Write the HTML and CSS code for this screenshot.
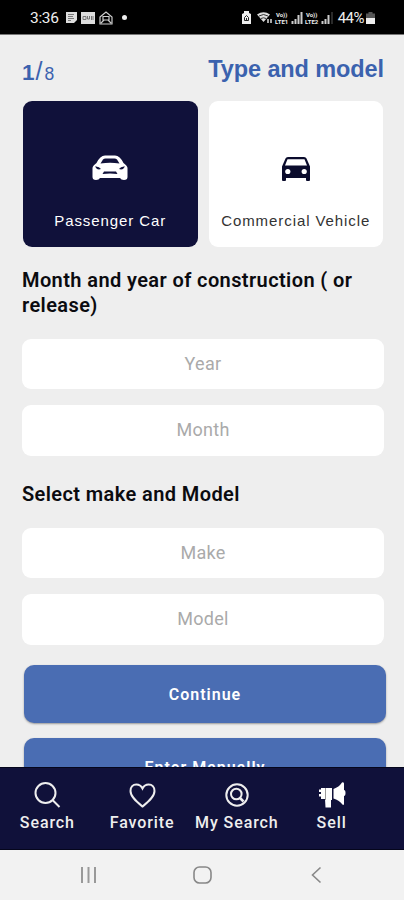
FILE: index.html
```html
<!DOCTYPE html>
<html lang="en">
<head>
    <meta charset="UTF-8">
    <meta name="viewport" content="width=device-width, initial-scale=1">
    <title>Type and model</title>
    <link rel="stylesheet" href="styles.css">
</head>
<body>
<div class="phone">

    <!-- Status bar -->
    <div class="status-bar">
        <div class="status-left">
            <span class="clock">3:36</span>
            <svg width="12" height="13" viewBox="0 0 12 13"><path d="M1 1h11v8l-3 3H1z" fill="#ddd"/><path d="M3 3.500h6M3 5.500h5M3 7.500h6M3 9.500h3" stroke="#777"/></svg>
            <svg width="14" height="12" viewBox="0 0 14 12"><path d="M0 0h14v12H0z" fill="#ddd"/><path d="M2 4.500h3v3H2zM6.500 4v3h2V4M10.500 4v4M12 4v4" fill="none" stroke="#777"/></svg>
            <svg width="14" height="14" viewBox="0 0 14 14"><path d="M1 6l6-5 6 5v7H1zM2 12l3-3h4l3 3M4 5.500h6V9H4z" fill="none" stroke="#ccc" stroke-width="1.200"/></svg>
            <span class="dot"></span>
        </div>
        <div class="status-right">
            <svg width="9" height="13" viewBox="0 0 9 13"><path d="M2 2V0h5v2l2 1v10H0V3z" fill="#eee"/><path d="M2.500 6.500l2-2 2 2v3h-4zM4.500 7v3" fill="none" stroke="#222"/></svg>
            <svg class="wifi" width="16" height="13" viewBox="0 0 16 13"><path d="M0 3.500Q6.500-1 13 3.500L6.500 11z" fill="#ddd"/><path d="M2 5q4.500-3 9 0M4 7.500q2.500-1.500 5 0" fill="none" stroke="#333"/><path d="M11 12V8M14 8v4" stroke="#ddd" stroke-width="1.500"/></svg>
            <span class="volte"><span>Vo))</span><span>LTE1</span></span>
            <svg width="12" height="12" viewBox="0 0 12 12"><path d="M1.500 12V9M4.500 12V7M7.500 12V3M10.500 12V0" stroke="#ccc" stroke-width="2"/></svg>
            <span class="volte"><span>Vo))</span><span>LTE2</span></span>
            <svg width="12" height="12" viewBox="0 0 12 12"><path d="M1.500 12V9M4.500 12V7M7.500 12V3" stroke="#ccc" stroke-width="2"/><path d="M11 12V0" stroke="#555"/></svg>
            <span class="battery">44%</span>
            <svg width="9" height="12" viewBox="0 0 9 12"><path d="M2.500 0h4v1.500H9V6H0V1.500h2.500z" fill="#555"/><path d="M0 6h9v6H0z" fill="#eee"/></svg>
        </div>
    </div>

    <!-- Form -->
    <main class="content">
        <header class="page-header">
            <div class="step"><b>1</b><span class="slash">/</span><span class="total">8</span></div>
            <h1>Type and model</h1>
        </header>

        <div class="cards">
            <div class="card active">
                <svg width="36" height="26" viewBox="0 0 36 26">
                    <path d="M.5 13q0-2 4-5Q8 .8 13 .5h10q5 .3 8.500 7.500 4 3 4 5v9q0 3-3.500 3-3 0-4-2H8q-1 2-4 2-3.500 0-3.500-3z" fill="#fff"/>
                    <path d="M8.500 8.500l2.500-4q1-1 2.500-1h9q1.500 0 2.500 1l2.500 4q-9.500-1.500-19 0z" fill="#10113a"/>
                    <path d="M3 11.500q4-.5 6 2.500-4 1.500-6-2.500zM33 11.500q-4-.5-6 2.500 4 1.500 6-2.500zM10.500 19l1.500-2.500h12l1.500 2.500q-7.500-1-15 0z" fill="#10113a"/>
                </svg>
                <span>Passenger Car</span>
            </div>
            <div class="card">
                <svg width="28" height="24" viewBox="0 0 28 24">
                    <path d="M0 9.500L3.500 1.500Q4 0 6 0h16q2 0 2.500 1.500l3.500 8V23q0 1-1 1h-2q-1 0-1-1v-2H4v2q0 1-1 1H1q-1 0-1-1z" fill="#0a0b2c"/>
                    <path d="M3 8.500L5.500 2.200h17L25 8.500z" fill="#fff"/>
                    <circle cx="5.800" cy="14.500" r="2.600" fill="#fff"/><circle cx="22.200" cy="14.500" r="2.600" fill="#fff"/>
                </svg>
                <span>Commercial Vehicle</span>
            </div>
        </div>

        <h2>Month and year of construction ( or release)</h2>
        <div class="fields">
            <input type="text" placeholder="Year">
            <input type="text" placeholder="Month">
        </div>

        <h2 class="make-title">Select make and Model</h2>
        <div class="fields">
            <input type="text" placeholder="Make">
            <input type="text" placeholder="Model">
        </div>

        <div class="buttons">
            <button>Continue</button>
            <button>Enter Manually</button>
        </div>
    </main>

    <!-- Bottom menu -->
    <nav class="tab-bar">
        <a class="tab">
            <svg width="28" height="28" viewBox="0 0 28 28" fill="none" stroke="#eee" stroke-width="2"><circle cx="12.500" cy="12" r="10"/><path d="M19.500 19l7 7"/></svg>
            <span>Search</span>
        </a>
        <a class="tab">
            <svg width="28" height="28" viewBox="0 0 28 28" fill="none" stroke="#eee" stroke-width="2"><path d="M14.500 25.500C9 21 2.500 16 2.500 10 2.500 6 5 3.500 8.300 3.500c2.700 0 5 1.500 6.200 4 1.200-2.500 3.500-4 6.200-4 3.300 0 5.800 2.500 5.800 6.500 0 6-6.500 11-12 15.500z"/></svg>
            <span>Favorite</span>
        </a>
        <a class="tab">
            <svg width="28" height="28" viewBox="0 0 28 28" fill="none" stroke="#eee" stroke-width="2"><circle cx="14" cy="14" r="10.700"/><circle cx="13.300" cy="13" r="5.300"/><path d="M16.500 16.500l4 4" stroke-width="2.500"/></svg>
            <span>My Search</span>
        </a>
        <a class="tab">
            <svg width="28" height="28" viewBox="0 0 28 28"><path d="M15.500 8Q21 6 24 1.500q1.500-1 2 1V9q1.500 0 1.500 3T26 15v8q-.5 2-2 0-3-4-8.500-5.500zM6 7h8v12h-1v7.500H7.500L7 18H3v-2.500H1V13h2v-2H1V8.500h2V7z" fill="#fff"/><path d="M7.500 7v12" stroke="#999"/></svg>
            <span>Sell</span>
        </a>
    </nav>

    <!-- Android buttons -->
    <div class="system-bar">
        <svg width="18" height="18" viewBox="0 0 18 18"><path d="M3 1v16M9.500 1v16M16 1v16" stroke="#999" stroke-width="2"/></svg>
        <svg width="18" height="18" viewBox="0 0 18 18"><rect x="1" y="1" width="17" height="16" rx="5.500" fill="none" stroke="#888" stroke-width="1.600"/></svg>
        <svg width="18" height="18" viewBox="0 0 18 18"><path d="M13.500 1.500L5.500 9l8 7.500" fill="none" stroke="#888" stroke-width="1.600"/></svg>
    </div>

</div>
</body>
</html>
```
FILE: styles.css
```css
* {
    box-sizing: border-box;
}

body {
    margin: 0;
    background: #eee;
    font-family: Roboto, sans-serif;
    color: #0b0b0f;
}

svg {
    display: block;
    flex: none;
    overflow: visible;
}

.phone {
    width: 404px;
    height: 900px;
    display: flex;
    flex-direction: column;
    overflow: hidden;
}

/* Status bar */
.status-bar {
    height: 35px;
    flex: none;
    display: flex;
    justify-content: space-between;
    align-items: center;
    padding: 1px 29px 0 30px;
    background: #000;
    border-bottom: 1px solid #777;
    color: #eee;
}

.status-left, .status-right {
    display: flex;
    align-items: center;
}

.status-left {
    gap: 4px;
}

.status-right {
    gap: 1px;
}

.clock {
    width: 31px;
    font-size: 15.500px;
    letter-spacing: -0.300px;
}

.dot {
    width: 5px;
    height: 5px;
    margin-left: 5px;
    border-radius: 50%;
    background: #eee;
}

.wifi {
    margin-left: 5px;
}

.volte {
    width: 16px;
    display: flex;
    flex-direction: column;
    align-items: center;
    font-size: 6px;
    line-height: 7px;
    font-weight: 700;
}

.battery {
    margin: 0 1px 0 4px;
    font-size: 15px;
    letter-spacing: -0.500px;
}

/* Form */
.content {
    flex: 1;
    min-height: 0;
    overflow: hidden;
    padding: 20px 20px 0 22px;
}

.page-header {
    height: 46px;
    display: flex;
    justify-content: space-between;
    color: #3b62ae;
    font-family: "Liberation Sans", sans-serif;
}

.step {
    padding-top: 3px;
    font-size: 22.500px;
    line-height: 26px;
}

.slash {
    font-size: 25px;
    margin: 0 2px 0 1px;
}

.total {
    font-size: 17.500px;
}

h1 {
    margin: 0;
    font-size: 23.500px;
    line-height: 28px;
    letter-spacing: -0.100px;
}

.cards {
    display: flex;
    gap: 11px;
    padding: 0 1px;
}

.card {
    flex: 1;
    height: 146px;
    display: flex;
    flex-direction: column;
    align-items: center;
    justify-content: flex-end;
    gap: 31px;
    padding-bottom: 17px;
    border-radius: 9px;
    background: #fff;
    color: #333;
    font: 15px/18px "Liberation Sans", sans-serif;
    letter-spacing: 0.920px;
    white-space: nowrap;
}

.card.active {
    background: #10113a;
    color: #fff;
}

h2 {
    margin: 21px 0 20.500px;
    font-size: 20px;
    line-height: 25px;
    font-weight: 600;
    letter-spacing: 0.400px;
}

.make-title {
    margin: 26px 0 21px;
}

.fields {
    display: flex;
    flex-direction: column;
    gap: 16px;
}

.fields input {
    width: 362px;
    height: 50.500px;
    padding: 0 0 1px;
    border: 0;
    border-radius: 9px;
    background: #fff;
    font: 18px Roboto, sans-serif;
    letter-spacing: 0.300px;
    text-align: center;
}

.fields input::placeholder {
    color: #aaa;
}

.buttons {
    display: flex;
    flex-direction: column;
    gap: 15px;
    padding: 20.500px 0 0 2px;
}

.buttons button {
    width: 362px;
    height: 58px;
    flex: none;
    border: 0;
    border-radius: 10px;
    background: #4a6db3;
    box-shadow: 0 1px 2px #999;
    color: #fff;
    font: 600 16px Roboto, sans-serif;
    letter-spacing: 1px;
}

/* Bottom menu */
.tab-bar {
    height: 83px;
    flex: none;
    display: flex;
    padding-right: 25px;
    background: #10113a;
    border-top: 1px solid #05061c;
    border-bottom: 1px solid #05061c;
}

.tab {
    flex: 1;
    display: flex;
    flex-direction: column;
    align-items: center;
    gap: 4px;
    padding-top: 13px;
    color: #eee;
    font-size: 16px;
    font-weight: 500;
    line-height: 20px;
    letter-spacing: 0.900px;
    white-space: nowrap;
}

/* Android buttons */
.system-bar {
    height: 50px;
    flex: none;
    display: flex;
    justify-content: center;
    align-items: center;
    gap: 96px;
    background: #f2f2f2;
}
```
